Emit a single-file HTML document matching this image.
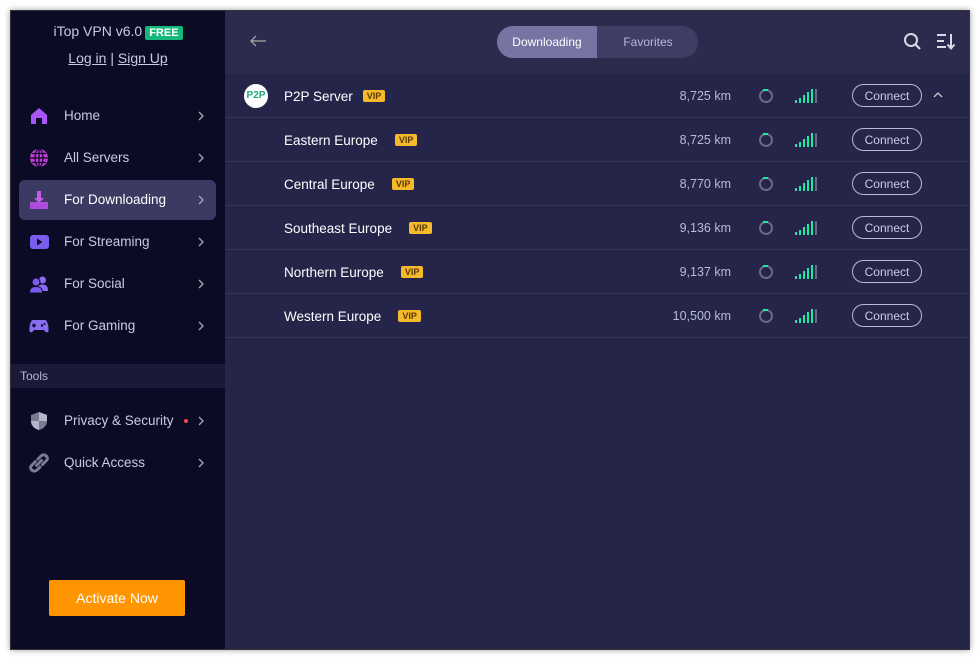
<!DOCTYPE html>
<html><head><meta charset="utf-8"><style>
*{box-sizing:border-box;margin:0;padding:0}
body{width:980px;height:660px;background:#fff;font-family:"Liberation Sans",sans-serif;position:relative;overflow:hidden}
.win{position:absolute;left:10px;top:10px;width:960px;height:640px;border:1px solid #333;box-shadow:0 0 6px rgba(0,0,0,.4);background:#25254a;overflow:hidden}
.side{position:absolute;left:0;top:0;width:214px;height:640px;background:#0c0b26}
.title{position:absolute;top:12px;left:0;width:214px;text-align:center;color:#c9cbe0;font-size:14px}
.free{background:#14b87a;color:#fff;font-size:11px;padding:1px 4px;border-radius:2px;font-weight:bold;margin-left:3px}
.login{position:absolute;top:39px;left:0;width:214px;text-align:center;color:#c9cbe0;font-size:14px}
.nav{position:absolute;left:8px;width:197px;height:40px;border-radius:6px;color:#c9cbe0;font-size:13.5px}
.nav.act{background:#3b3a62;color:#fff}
.nav .ic{position:absolute;left:10px;top:10px;width:20px;height:20px}
.nav .t{position:absolute;left:45px;top:12px}
.nav .ch{position:absolute;right:12px;top:15px;width:6px;height:10px}
.tools{position:absolute;top:353px;left:0;width:214px;height:24px;background:#1a1938;color:#b8bad0;font-size:12px;padding:5px 9px}
.act-btn{position:absolute;left:38px;top:569px;width:136px;height:36px;background:#ff9500;color:#fff;font-size:14px;text-align:center;line-height:36px;border-radius:2px}
.hdr{position:absolute;left:214px;top:0;width:746px;height:63px;background:#2c2b4d}
.seg{position:absolute;left:272px;top:15px;width:201px;height:32px;border-radius:16px;background:#3e3d63;overflow:hidden;font-size:12px}
.seg .a{position:absolute;left:0;top:0;width:100px;height:32px;background:#7574a3;color:#fff;text-align:center;line-height:32px}
.seg .b{position:absolute;left:101px;top:0;width:100px;height:32px;color:#b8b9d9;text-align:center;line-height:32px}
.row{position:absolute;left:214px;width:746px;height:44px;border-bottom:1px solid #35355a;color:#fff;font-size:13.5px}
.row .n{position:absolute;left:59px;top:15px}
.vip{display:inline-block;background:#f5b92c;color:#5a3b00;font-size:9px;font-weight:bold;padding:1px 4px;border-radius:2px;margin-left:10px;vertical-align:2px}
.row .km{position:absolute;right:240px;top:15px;color:#b8bad8;font-size:12.5px}
.spin{position:absolute;left:534px;top:15px;width:14px;height:14px;border-radius:50%;border:2px solid #6a6a86}
.spin:after{content:"";position:absolute;left:2px;top:-2px;width:5px;height:2px;background:#1de9a4}
.sig{position:absolute;left:570px;top:15px;width:24px;height:14px}
.sig i{position:absolute;bottom:0;width:2px;background:#1de9a4}
.btn{position:absolute;left:627px;top:10px;width:70px;height:23px;border:1px solid #b8b9d6;border-radius:12px;color:#c9cbe6;font-size:12px;text-align:center;line-height:22px}
</style></head><body>
<div class="win">
<div class="side">
<div class="title">iTop VPN v6.0<span class="free">FREE</span></div>
<div class="login"><u>Log in</u> | <u>Sign Up</u></div>
<div class="nav" style="top:85px"><svg class="ic" viewBox="0 0 20 20"><path d="M2 9L10 2L18 9V18H13V12H7V18H2Z" fill="#a855f7"/></svg><span class="t">Home</span><svg class="ch" viewBox="0 0 6 10"><path d="M1 1L5 5L1 9" stroke="#aaa" stroke-width="1.3" fill="none"/></svg></div>
<div class="nav" style="top:127px"><svg class="ic" viewBox="0 0 20 20"><circle cx="10" cy="10" r="9" fill="#c13fd8"/><path d="M1 10H19M10 1V19M3 5.5H17M3 14.5H17" stroke="#0c0b26" stroke-width="1.3" fill="none"/><ellipse cx="10" cy="10" rx="4" ry="9" stroke="#0c0b26" stroke-width="1.3" fill="none"/></svg><span class="t">All Servers</span><svg class="ch" viewBox="0 0 6 10"><path d="M1 1L5 5L1 9" stroke="#aaa" stroke-width="1.3" fill="none"/></svg></div>
<div class="nav act" style="top:169px"><svg class="ic" viewBox="0 0 20 20"><path d="M8 1H12V8H15L10 13L5 8H8Z" fill="#c35be8"/><rect x="1" y="12" width="18" height="7" fill="#b04be0"/></svg><span class="t">For Downloading</span><svg class="ch" viewBox="0 0 6 10"><path d="M1 1L5 5L1 9" stroke="#aaa" stroke-width="1.3" fill="none"/></svg></div>
<div class="nav" style="top:211px"><svg class="ic" viewBox="0 0 20 20"><rect x="1" y="3" width="19" height="14" rx="3" fill="#7b5cf0"/><path d="M8 6.5L13.5 10L8 13.5Z" fill="#0c0b26"/></svg><span class="t">For Streaming</span><svg class="ch" viewBox="0 0 6 10"><path d="M1 1L5 5L1 9" stroke="#aaa" stroke-width="1.3" fill="none"/></svg></div>
<div class="nav" style="top:253px"><svg class="ic" viewBox="0 0 20 20"><circle cx="13.5" cy="6" r="3.5" fill="#8a6cf0"/><path d="M8 17C8 12 10 10.5 13.5 10.5S19 12 19 17Z" fill="#8a6cf0"/><circle cx="7" cy="8" r="4" fill="#7b5cf0" stroke="#0c0b26"/><path d="M0.5 19C0.5 14 3 12.5 7 12.5S13.5 14 13.5 19Z" fill="#7b5cf0" stroke="#0c0b26"/></svg><span class="t">For Social</span><svg class="ch" viewBox="0 0 6 10"><path d="M1 1L5 5L1 9" stroke="#aaa" stroke-width="1.3" fill="none"/></svg></div>
<div class="nav" style="top:295px"><svg class="ic" viewBox="0 0 20 20"><path d="M4 4H16C18 4 20 10 19.5 15C19 17 17 17 15 14H5C3 17 1 17 0.5 15C0 10 2 4 4 4Z" fill="#8a6cf0"/><path d="M5 7.5V11.5M3 9.5H7" stroke="#0c0b26" stroke-width="1.5"/><circle cx="13" cy="9.5" r="1.2" fill="#0c0b26"/><circle cx="15.5" cy="8" r="1" fill="#0c0b26"/></svg><span class="t">For Gaming</span><svg class="ch" viewBox="0 0 6 10"><path d="M1 1L5 5L1 9" stroke="#aaa" stroke-width="1.3" fill="none"/></svg></div>
<div class="tools">Tools</div>
<div class="nav" style="top:390px"><svg class="ic" viewBox="0 0 20 20"><path d="M10 1L18 4V10C18 15 14 18 10 19C6 18 2 15 2 10V4Z" fill="#7a7a92"/><path d="M10 1V10H18V4ZM10 10V19C6 18 2 15 2 10Z" fill="#b5b5c8"/></svg><span class="t">Privacy &amp; Security</span><span style="position:absolute;left:165px;top:18px;width:4px;height:4px;border-radius:50%;background:#f04848"></span><svg class="ch" viewBox="0 0 6 10"><path d="M1 1L5 5L1 9" stroke="#aaa" stroke-width="1.3" fill="none"/></svg></div>
<div class="nav" style="top:432px"><svg class="ic" viewBox="0 0 20 20"><path d="M9 6L12 3C14 1 17 2 18 4S18 7 16.5 8.5L13.5 11.5M11 14L8 17C6 19 3 18 2 16S2 13 3.5 11.5L6.5 8.5M7.5 12.5L12.5 7.5" stroke="#7a7a92" stroke-width="3" fill="none" stroke-linecap="round"/></svg><span class="t">Quick Access</span><svg class="ch" viewBox="0 0 6 10"><path d="M1 1L5 5L1 9" stroke="#aaa" stroke-width="1.3" fill="none"/></svg></div>
<div class="act-btn">Activate Now</div>
</div>
<div class="hdr">
<svg style="position:absolute;left:24px;top:23px" width="18" height="14" viewBox="0 0 18 14"><path d="M17 7H2M7 2L2 7L7 12" stroke="#aaa" stroke-width="1.2" fill="none"/></svg>
<div class="seg"><div class="a">Downloading</div><div class="b">Favorites</div></div>
<svg style="position:absolute;left:678px;top:21px" width="20" height="20" viewBox="0 0 20 20"><circle cx="8" cy="8" r="6" stroke="#d8d8e8" stroke-width="2" fill="none"/><path d="M12.5 12.5L17 17" stroke="#d8d8e8" stroke-width="2.2"/></svg>
<svg style="position:absolute;left:711px;top:22px" width="20" height="18" viewBox="0 0 20 18"><path d="M1 2H10M1 8H8M1 14H10M15 1V15M11.5 11.5L15 15.5L18.5 11.5" stroke="#d8d8e8" stroke-width="2" fill="none"/></svg>
</div>
<div class="row" style="top:63px"><div style="position:absolute;left:19px;top:10px;width:24px;height:24px;border-radius:50%;background:#fff;color:#1ea97c;font-size:10px;font-weight:bold;text-align:center;line-height:24px">P2P</div><span class="n">P2P Server<span class="vip">VIP</span></span><span class="km">8,725 km</span><div class="spin"></div><div class="sig"><i style="left:0;height:3px"></i><i style="left:4px;height:5px"></i><i style="left:8px;height:8px"></i><i style="left:12px;height:11px"></i><i style="left:16px;height:14px"></i><i style="left:20px;height:14px;background:#6a6a86"></i></div><div class="btn">Connect</div><svg style="position:absolute;left:708px;top:18px" width="10" height="6" viewBox="0 0 10 6"><path d="M1 5L5 1L9 5" stroke="#ccc" stroke-width="1.3" fill="none"/></svg></div>
<div class="row" style="top:107px"><span class="n">Eastern Europe<span class="vip" style="margin-left:17px">VIP</span></span><span class="km">8,725 km</span><div class="spin"></div><div class="sig"><i style="left:0;height:3px"></i><i style="left:4px;height:5px"></i><i style="left:8px;height:8px"></i><i style="left:12px;height:11px"></i><i style="left:16px;height:14px"></i><i style="left:20px;height:14px;background:#6a6a86"></i></div><div class="btn">Connect</div></div>
<div class="row" style="top:151px"><span class="n">Central Europe<span class="vip" style="margin-left:17px">VIP</span></span><span class="km">8,770 km</span><div class="spin"></div><div class="sig"><i style="left:0;height:3px"></i><i style="left:4px;height:5px"></i><i style="left:8px;height:8px"></i><i style="left:12px;height:11px"></i><i style="left:16px;height:14px"></i><i style="left:20px;height:14px;background:#6a6a86"></i></div><div class="btn">Connect</div></div>
<div class="row" style="top:195px"><span class="n">Southeast Europe<span class="vip" style="margin-left:17px">VIP</span></span><span class="km">9,136 km</span><div class="spin"></div><div class="sig"><i style="left:0;height:3px"></i><i style="left:4px;height:5px"></i><i style="left:8px;height:8px"></i><i style="left:12px;height:11px"></i><i style="left:16px;height:14px"></i><i style="left:20px;height:14px;background:#6a6a86"></i></div><div class="btn">Connect</div></div>
<div class="row" style="top:239px"><span class="n">Northern Europe<span class="vip" style="margin-left:17px">VIP</span></span><span class="km">9,137 km</span><div class="spin"></div><div class="sig"><i style="left:0;height:3px"></i><i style="left:4px;height:5px"></i><i style="left:8px;height:8px"></i><i style="left:12px;height:11px"></i><i style="left:16px;height:14px"></i><i style="left:20px;height:14px;background:#6a6a86"></i></div><div class="btn">Connect</div></div>
<div class="row" style="top:283px"><span class="n">Western Europe<span class="vip" style="margin-left:17px">VIP</span></span><span class="km">10,500 km</span><div class="spin"></div><div class="sig"><i style="left:0;height:3px"></i><i style="left:4px;height:5px"></i><i style="left:8px;height:8px"></i><i style="left:12px;height:11px"></i><i style="left:16px;height:14px"></i><i style="left:20px;height:14px;background:#6a6a86"></i></div><div class="btn">Connect</div></div>
</div>
</body></html>
